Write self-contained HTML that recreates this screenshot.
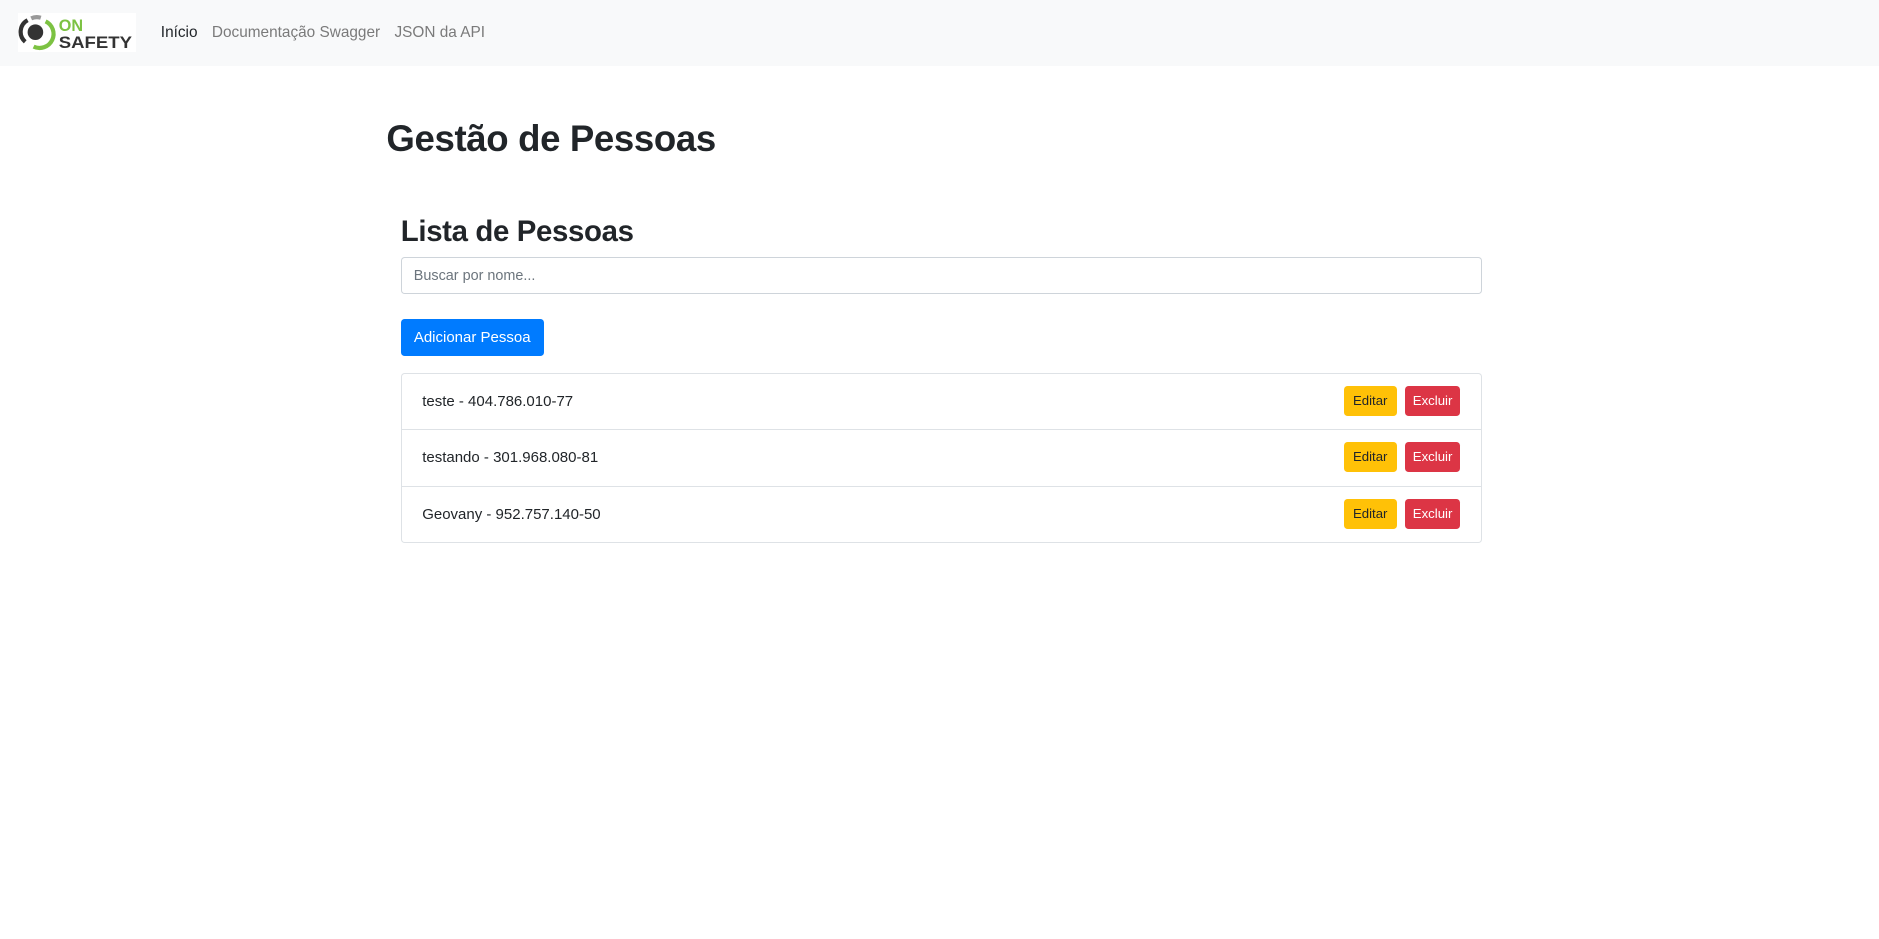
<!DOCTYPE html>
<html><head><meta charset="utf-8"><style>
html{zoom:1.2}
body{margin:0;font-family:"Liberation Sans",Arial,sans-serif;color:#212529;background:#fff;width:1566px;}
.nav{height:55px;background:#f8f9fa;position:relative}
.logo{position:absolute;left:15px;top:11px;width:98px;height:32px;background:#fff}
.links{position:absolute;left:134px;top:20px;font-size:12.8px}
.links span{margin-right:12px;color:#7a7a7a}
.links span.a{color:#212529}
h1{position:absolute;left:322px;top:98px;margin:0;font-size:30.5px;font-weight:bold;letter-spacing:-0.3px}
h2{position:absolute;left:334px;top:179px;margin:0;font-size:24.5px;font-weight:bold;letter-spacing:-0.3px}
.input{position:absolute;left:334px;top:214px;height:29px;border:1px solid #ced4da;border-radius:3px;font-size:12px;color:#6c757d;line-height:31px;padding-left:10px;box-sizing:content-box;width:889px}
.add{position:absolute;left:334px;top:266px;width:119px;height:31px;background:#007bff;color:#fff;border-radius:3px;font-size:12.5px;line-height:31px;text-align:center}
.list{position:absolute;left:334px;top:311px;width:899px;border:1px solid #dee2e6;border-radius:3px}
.item{height:46px;border-top:1px solid #dee2e6;position:relative;font-size:12.5px;line-height:46px;padding-left:17px}
.item:first-child{border-top:none}
.b{position:absolute;top:10px;height:25px;line-height:25px;font-size:11px;text-align:center;border-radius:3px}
.e{left:785px;width:44px;background:#ffc107;color:#212529}
.x{left:836px;width:46px;background:#dc3545;color:#fff}
</style></head><body>
<div class="nav">
<div class="logo">
<svg width="98" height="32" viewBox="0 0 98 32">
<path d="M6 24 A11 11 0 0 1 8 6" stroke="#333" stroke-width="3.5" fill="none"/>
<path d="M11 4.5 A11 11 0 0 1 19 4" stroke="#999" stroke-width="3.5" fill="none"/>
<path d="M23 7 A11 11 0 0 1 13 28" stroke="#7cc242" stroke-width="3.5" fill="none"/>
<circle cx="14.5" cy="16" r="6.5" fill="#333"/>
<text x="34" y="15" font-family="Liberation Sans" font-weight="bold" font-size="13.5" fill="#7cc242">ON</text>
<text x="34" y="29" font-family="Liberation Sans" font-weight="bold" font-size="13.5" fill="#333" textLength="61" lengthAdjust="spacingAndGlyphs">SAFETY</text>
</svg></div>
<div class="links"><span class="a">Início</span><span>Documentação Swagger</span><span>JSON da API</span></div>
</div>
<h1>Gestão de Pessoas</h1>
<h2>Lista de Pessoas</h2>
<div class="input">Buscar por nome...</div>
<div class="add">Adicionar Pessoa</div>
<div class="list">
<div class="item">teste - 404.786.010-77<div class="b e">Editar</div><div class="b x">Excluir</div></div>
<div class="item">testando - 301.968.080-81<div class="b e">Editar</div><div class="b x">Excluir</div></div>
<div class="item">Geovany - 952.757.140-50<div class="b e">Editar</div><div class="b x">Excluir</div></div>
</div>
</body></html>
